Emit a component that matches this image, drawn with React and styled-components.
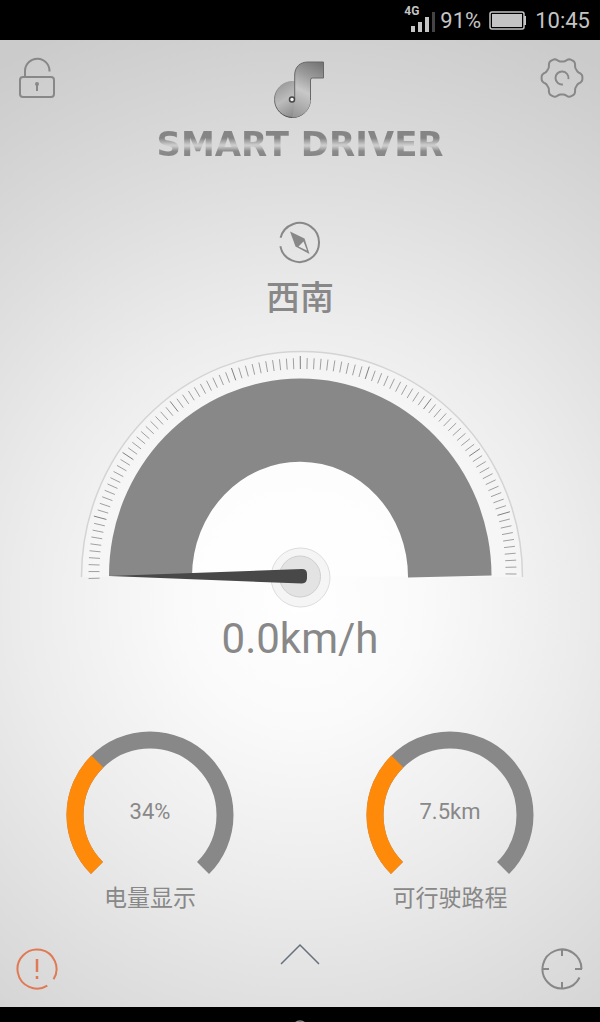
import React from 'react';
import styled, { createGlobalStyle } from 'styled-components';

const GREY = '#888888';
const ORANGE = '#ff8a0a';

const toXY = (cx, cy, r, deg) => {
  const a = (deg * Math.PI) / 180;
  return [(cx + r * Math.sin(a)).toFixed(2), (cy - r * Math.cos(a)).toFixed(2)];
};

// angles are measured clockwise from twelve o'clock
const arc = (cx, cy, r, from, to) => {
  const [x1, y1] = toXY(cx, cy, r, from);
  const [x2, y2] = toXY(cx, cy, r, to);
  return `M${x1} ${y1}A${r} ${r} 0 ${to - from > 180 ? 1 : 0} 1 ${x2} ${y2}`;
};

const gearPath = () => {
  const points = [];
  for (let deg = 0; deg < 360; deg += 3) {
    const wave = Math.cos((6 * (deg - 90) * Math.PI) / 180);
    const r = 18.5 + 1.9 * Math.sin((wave * Math.PI) / 2);
    points.push(toXY(22, 22, r, deg).join(' '));
  }
  return `M${points.join('L')}Z`;
};

const LockIcon = () => (
  <Icon viewBox="0 0 44 44">
    <rect x="4" y="21" width="34" height="20" rx="3" />
    <path d="M9 21V14.500A12 12 0 0 1 33.500 15.500" />
    <circle cx="21" cy="28" r="2" fill="currentColor" stroke="none" />
    <path d="M21 28v7" />
  </Icon>
);

const GearIcon = () => (
  <Icon viewBox="0 0 44 44">
    <path d={gearPath()} />
    <path d={arc(22, 22, 6.5, 172, 460)} />
  </Icon>
);

const CompassIcon = () => (
  <Icon viewBox="0 0 44 44">
    <path d={arc(21.5, 22.5, 19.5, -76, 259)} />
    <path d="M12 11.500L26.500 18.500L31.500 34L17.500 26.500Z" fill="currentColor" stroke="none" />
    <path d="M25.500 21.500L29 30.500L20.500 26.500Z" fill="#e8e8e8" stroke="none" />
  </Icon>
);

const AlertIcon = () => (
  <Icon viewBox="0 0 44 44">
    <path d={arc(21, 22, 19.5, 148, 482)} />
    <path d="M21 12v13M21 29v3" strokeWidth="2.500" />
  </Icon>
);

const TargetIcon = () => (
  <Icon viewBox="0 0 44 44">
    <path d={arc(22, 22, 19.5, 116, 450)} />
    <path d="M22 3v6M22 35v6M3 22h6M35 22h7" />
  </Icon>
);

const Logo = () => (
  <LogoMark viewBox="0 0 52 60" aria-hidden="true">
    <defs>
      <linearGradient id="disc" x1="0" y1="0" x2="0.6" y2="1">
        <stop offset="0" stopColor="#909090" />
        <stop offset="0.5" stopColor="#bcbcbc" />
        <stop offset="1" stopColor="#858585" />
      </linearGradient>
      <linearGradient id="stem" gradientUnits="userSpaceOnUse" x1="48" y1="2" x2="20" y2="58">
        <stop offset="0" stopColor="#727272" />
        <stop offset="0.300" stopColor="#9c9c9c" />
        <stop offset="0.550" stopColor="#c8c8c8" />
        <stop offset="1" stopColor="#949494" />
      </linearGradient>
      <linearGradient id="rim" x1="0" y1="0" x2="0" y2="1">
        <stop offset="0" stopColor="#a0a0a0" />
        <stop offset="1" stopColor="#4c4c4c" />
      </linearGradient>
    </defs>
    <circle cx="18.500" cy="39.500" r="18" fill="url(#disc)" stroke="url(#rim)" />
    <path
      d="M49.500 2H34C26 2 20.700 7 20.700 15V40L18.500 57.500A18 18 0 0 0 36.500 39.500V20Q36.500 18 38.500 18H49.500Z"
      fill="url(#stem)"
    />
    <path d="M20.700 39V15C20.700 7 26 2 34 2H49.500V18H38.500Q36.500 18 36.500 20V40" fill="none" stroke="#686868" />
    <circle cx="18" cy="39.500" r="2.500" fill="#f4f4f4" stroke="#484848" strokeWidth="1.500" />
  </LogoMark>
);

const ticks = Array.from({ length: 99 }, (_, i) => i - 49);

const Speedometer = () => (
  <Dial viewBox="0 0 450 262" role="img" aria-label="Speed">
    <path d="M6.500 231A220.500 225.500 0 0 1 447.500 231Z" fill="#ffffff" fillOpacity="0.300" />
    <path d="M6.500 231A220.500 225.500 0 0 1 447.500 231" fill="none" stroke="#d4d4d4" strokeWidth="1.500" />
    {ticks.map(n => {
      const major = n % 10 === 0;
      const deg = n * 1.86 - 0.6;
      const [x1, y1] = toXY(227.5, 226, 203, deg);
      const [x2, y2] = toXY(227.5, 226, major ? 216 : 214, deg);
      return <line key={n} x1={x1} y1={y1} x2={x2} y2={y2} stroke={major ? '#808080' : '#a0a0a0'} />;
    })}
    <path d="M117 230A108 114.500 0 0 1 333 230Z" fill="#ffffff" fillOpacity="0.600" />
    <path d="M34 230A191 197 0 0 1 416.500 229.500L333 231.500A108 115 0 0 0 117 230Z" fill={GREY} />
    <circle cx="225.500" cy="231.500" r="29.500" fill="#f5f5f5" stroke="#dddddd" />
    <circle cx="225" cy="230.500" r="20.500" fill="#e3e3e3" stroke="#cfcfcf" />
    <path d="M34 230L227 223Q232 223 232 228V232Q232 237 227 237.500Z" fill="#484848" />
  </Dial>
);

const Meter = ({ label, value, ratio }) => (
  <MeterBox>
    <MeterDial>
      <svg viewBox="0 0 168 146" aria-hidden="true">
        <path d={arc(84, 85, 75, -135, 135)} fill="none" stroke={GREY} strokeWidth="17" />
        <path d={arc(84, 85, 75, -135, -135 + 270 * ratio)} fill="none" stroke={ORANGE} strokeWidth="17" />
      </svg>
      <MeterValue>{value}</MeterValue>
    </MeterDial>
    <MeterLabel>{label}</MeterLabel>
  </MeterBox>
);

const App = () => (
  <Screen>
    <GlobalStyle />
    <StatusBar>
      <Signal>
        <Network>4G</Network>
        <svg width="24" height="22" viewBox="0 0 24 22" aria-hidden="true">
          <path d="M0 15h4v6h-4zM7 11h4v10h-4zM14 6h4v15h-4z" fill="#c4c4c4" />
          <path d="M21 1h3v20h-3z" fill="#444444" />
        </svg>
      </Signal>
      <StatusText>91%</StatusText>
      <svg width="38" height="20" viewBox="0 0 38 20" aria-hidden="true">
        <rect x="1" y="2" width="34" height="17" rx="2" fill="none" stroke="#c4c4c4" strokeWidth="1.500" />
        <rect x="3" y="4" width="30" height="13" fill="#c4c4c4" />
        <path d="M35 6h2v9h-2z" fill="#c4c4c4" />
      </svg>
      <StatusText>10:45</StatusText>
    </StatusBar>
    <Main>
      <Header>
        <IconButton aria-label="Unlock"><LockIcon /></IconButton>
        <Brand>
          <Logo />
          <Wordmark>SMART DRIVER</Wordmark>
        </Brand>
        <IconButton aria-label="Settings"><GearIcon /></IconButton>
      </Header>
      <Heading>
        <CompassIcon />
        <Direction>西南</Direction>
      </Heading>
      <Speed>
        <Speedometer />
        <SpeedValue>0.0km/h</SpeedValue>
      </Speed>
      <Meters>
        <Meter label="电量显示" value="34%" ratio={0.335} />
        <Meter label="可行驶路程" value="7.5km" ratio={0.335} />
      </Meters>
      <Footer>
        <IconButton aria-label="Alerts" color="#e07a55"><AlertIcon /></IconButton>
        <MoreButton aria-label="More">
          <svg width="40" height="24" viewBox="0 0 40 24" aria-hidden="true">
            <path d="M1 21L20 2L39 21" fill="none" stroke="#66707a" strokeWidth="1.500" />
          </svg>
        </MoreButton>
        <IconButton aria-label="Locate"><TargetIcon /></IconButton>
      </Footer>
    </Main>
    <NavBar>
      <svg width="16" height="2" viewBox="0 0 16 2" aria-hidden="true">
        <circle cx="8" cy="8" r="7" fill="none" stroke="#8a8a8a" strokeWidth="1.500" />
      </svg>
    </NavBar>
  </Screen>
);

export default App;

const GlobalStyle = createGlobalStyle`
  * {
    box-sizing: border-box;
  }

  body {
    margin: 0;
    background: #000000;
    color: ${GREY};
    font-family: Roboto, "Noto Sans CJK SC", sans-serif;
  }

  svg {
    display: block;
  }
`

const Screen = styled.div`
  display: flex;
  flex-direction: column;
  min-height: 100vh;
`

const StatusBar = styled.div`
  display: flex;
  align-items: center;
  justify-content: flex-end;
  gap: 8px;
  height: 40px;
  padding: 0 10px;
  background: #000000;
  color: #c4c4c4;
`

const Signal = styled.div`
  display: flex;
  align-items: flex-start;
  margin-right: -3px;

  svg {
    margin: 4px 0 0 -8px;
  }
`

const Network = styled.span`
  font-size: 12px;
  font-weight: 700;
  line-height: 8px;
`

const StatusText = styled.span`
  font-size: 22px;
  line-height: 24px;
  padding-top: 2px;
`

const Main = styled.main`
  display: flex;
  flex: 1;
  flex-direction: column;
  background: radial-gradient(ellipse 100% 64% at 50% 58%, #ffffff 0%, #fafafa 20%, #ececec 46%, #dedede 68%, #d2d2d2 88%, #cbcbcb 100%);
`

const Header = styled.header`
  display: grid;
  grid-template-columns: 44px 1fr 44px;
  align-items: start;
  padding: 16px 16px 0;
`

const IconButton = styled.button`
  width: 44px;
  height: 44px;
  padding: 0;
  border: none;
  background: none;
  color: ${({ color }) => color || GREY};
  cursor: pointer;
`

const Icon = styled.svg`
  width: 44px;
  height: 44px;
  fill: none;
  stroke: currentColor;
  stroke-width: 2;
`

const Brand = styled.div`
  display: flex;
  flex-direction: column;
  align-items: center;
  gap: 4px;
  padding-top: 4px;
`

const LogoMark = styled.svg`
  width: 52px;
  height: 60px;
`

const Wordmark = styled.h1`
  margin: 0;
  font-family: "DejaVu Sans", sans-serif;
  font-size: 34px;
  font-weight: 700;
  line-height: 40px;
  white-space: nowrap;
  color: transparent;
  background: linear-gradient(#858585 14px, #cccccc 21px, #cccccc 22px, #8c8c8c 27px, #858585 32px);
  background-clip: text;
`

const Heading = styled.section`
  display: flex;
  flex-direction: column;
  align-items: center;
  gap: 14px;
  margin-top: 56px;
`

const Direction = styled.p`
  margin: 0;
  font-size: 34px;
  font-weight: 500;
  line-height: 40px;
`

const Speed = styled.section`
  display: flex;
  flex-direction: column;
  align-items: center;
  gap: 7px;
  margin-top: 28px;
`

const Dial = styled.svg`
  width: 75%;
`

const SpeedValue = styled.p`
  margin: 0;
  font-size: 42px;
  line-height: 48px;
`

const Meters = styled.section`
  display: grid;
  grid-template-columns: 1fr 1fr;
  margin-top: 67px;
`

const MeterBox = styled.div`
  display: flex;
  flex-direction: column;
  align-items: center;
  gap: 7px;
`

const MeterDial = styled.div`
  display: grid;
  width: 56%;

  > * {
    grid-area: 1 / 1;
  }
`

const MeterValue = styled.span`
  align-self: center;
  padding-top: 18px;
  text-align: center;
  font-size: 22px;
  line-height: 24px;
`

const MeterLabel = styled.p`
  margin: 0;
  font-size: 23px;
  line-height: 32px;
`

const Footer = styled.footer`
  display: flex;
  align-items: flex-end;
  justify-content: space-between;
  margin-top: auto;
  padding: 16px;
`

const MoreButton = styled.button`
  height: 48px;
  padding: 0 0 24px;
  border: none;
  background: none;
  cursor: pointer;
`

const NavBar = styled.div`
  display: flex;
  align-items: flex-end;
  justify-content: center;
  height: 15px;
  background: #000000;
`
